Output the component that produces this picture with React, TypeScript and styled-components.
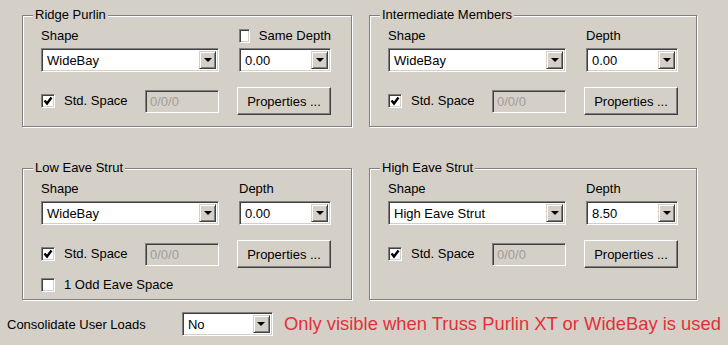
import styled, { createGlobalStyle } from 'styled-components';

const GlobalStyle = createGlobalStyle`
  html, body {
    margin: 0;
    padding: 0;
    background: #d4d0c8;
  }
  body {
    font-family: 'Liberation Sans', Arial, sans-serif;
    font-size: 13px;
    color: #000;
  }
`;

type GroupData = {
  title: string;
  shape: string;
  depth: string;
  sameDepth?: boolean;
  oddEave?: boolean;
};

const top: GroupData[] = [
  { title: 'Ridge Purlin', shape: 'WideBay', depth: '0.00', sameDepth: true },
  { title: 'Intermediate Members', shape: 'WideBay', depth: '0.00' },
];

const bottom: GroupData[] = [
  { title: 'Low Eave Strut', shape: 'WideBay', depth: '0.00', oddEave: true },
  { title: 'High Eave Strut', shape: 'High Eave Strut', depth: '8.50' },
];

const Arrow = () => (
  <svg width="8" height="4" viewBox="0 0 8 4">
    <polygon points="0,0 8,0 4,4" fill="#000" />
  </svg>
);

const Tick = () => (
  <svg width="10" height="10" viewBox="0 0 10 10">
    <polyline points="1.5,4.5 4,7.5 8.5,1.5" fill="none" stroke="#000" strokeWidth="2.4" />
  </svg>
);

const Dropdown = ({ value, width }: { value: string; width?: number }) => (
  <SelectBox $width={width}>
    <SelectText>{value}</SelectText>
    <ArrowBtn>
      <Arrow />
    </ArrowBtn>
  </SelectBox>
);

const Check = ({ label, checked }: { label: string; checked?: boolean }) => (
  <CheckLabel>
    <CheckBox>{checked && <Tick />}</CheckBox>
    <span>{label}</span>
  </CheckLabel>
);

const Group = ({ data, padBottom }: { data: GroupData; padBottom: number }) => (
  <Fieldset $pb={padBottom}>
    <Legend>{data.title}</Legend>
    <Row $top={0}>
      <Label>Shape</Label>
      {data.sameDepth ? <Check label="Same Depth" /> : <Label>Depth</Label>}
    </Row>
    <Row $top={4}>
      <Dropdown value={data.shape} />
      <Dropdown value={data.depth} />
    </Row>
    <Row $top={15}>
      <SpaceCell>
        <Check label="Std. Space" checked />
        <TextBox>0/0/0</TextBox>
      </SpaceCell>
      <Button>Properties ...</Button>
    </Row>
    {data.oddEave && (
      <Row $top={9}>
        <Check label="1 Odd Eave Space" />
      </Row>
    )}
  </Fieldset>
);

const App = () => {
  return (
    <Page>
      <GlobalStyle />
      <Groups>
        {top.map((g) => (
          <Group key={g.title} data={g} padBottom={11} />
        ))}
        {bottom.map((g) => (
          <Group key={g.title} data={g} padBottom={6} />
        ))}
      </Groups>
      <Footer>
        <FooterLabel>Consolidate User Loads</FooterLabel>
        <Dropdown value="No" width={91} />
        <Notice>Only visible when Truss Purlin XT or WideBay is used</Notice>
      </Footer>
    </Page>
  );
};

const Page = styled.div`
  padding: 7px 7px 0;
`;

const Groups = styled.div`
  display: grid;
  grid-template-columns: 330px 328px;
  column-gap: 17px;
  row-gap: 33px;
  padding: 0 15px;
`;

const Fieldset = styled.fieldset<{ $pb: number }>`
  margin: 0;
  min-width: 0;
  padding: 5px 10px ${(p) => p.$pb}px 18px;
  border: 1px solid #808080;
  box-shadow: inset 1px 1px 0 #fff, 1px 1px 0 #fff;
`;

const Legend = styled.legend`
  padding: 0 2px;
  margin-left: -8px;
  line-height: 16px;
  background: #d4d0c8;
`;

const Row = styled.div<{ $top: number }>`
  display: grid;
  grid-template-columns: 178px 92px;
  column-gap: 20px;
  align-items: center;
  margin-top: ${(p) => p.$top}px;
`;

const Label = styled.div`
  line-height: 16px;
`;

const SelectBox = styled.div<{ $width?: number }>`
  display: flex;
  align-items: center;
  box-sizing: border-box;
  width: ${(p) => (p.$width ? `${p.$width}px` : '100%')};
  height: 24px;
  background: #fff;
  border: 1px solid;
  border-color: #808080 #fff #fff #808080;
  box-shadow: inset 1px 1px 0 #404040, inset -1px -1px 0 #d4d0c8;
  padding: 2px;
`;

const SelectText = styled.span`
  flex: 1;
  padding-left: 3px;
  white-space: nowrap;
  overflow: hidden;
`;

const ArrowBtn = styled.span`
  display: flex;
  align-items: center;
  justify-content: center;
  box-sizing: border-box;
  width: 17px;
  height: 18px;
  background: #d4d0c8;
  border: 1px solid;
  border-color: #d4d0c8 #404040 #404040 #d4d0c8;
  box-shadow: inset 1px 1px 0 #fff, inset -1px -1px 0 #808080;
`;

const CheckLabel = styled.label`
  display: flex;
  align-items: center;
  gap: 9px;
  line-height: 16px;
  white-space: nowrap;
`;

const CheckBox = styled.span`
  display: flex;
  align-items: center;
  justify-content: center;
  box-sizing: border-box;
  width: 14px;
  height: 14px;
  background: #fff;
  border: 1px solid;
  border-color: #808080 #fff #fff #808080;
  box-shadow: inset 1px 1px 0 #404040, inset -1px -1px 0 #d4d0c8;
`;

const SpaceCell = styled.div`
  display: flex;
  align-items: center;
  justify-content: space-between;
`;

const TextBox = styled.div`
  box-sizing: border-box;
  width: 74px;
  height: 23px;
  padding: 3px 4px;
  line-height: 15px;
  color: #a09d98;
  border: 1px solid;
  border-color: #808080 #fff #fff #808080;
  box-shadow: inset 1px 1px 0 #404040, inset -1px -1px 0 #d4d0c8;
`;

const Button = styled.button`
  box-sizing: border-box;
  width: 94px;
  height: 28px;
  margin-left: -2px;
  padding: 0;
  font: inherit;
  color: #000;
  background: #d4d0c8;
  border: 1px solid;
  border-color: #fff #404040 #404040 #fff;
  box-shadow: inset -1px -1px 0 #808080;
`;

const Footer = styled.div`
  display: flex;
  align-items: center;
  margin-top: 12px;
`;

const FooterLabel = styled.div`
  width: 175px;
`;

const Notice = styled.div`
  margin-left: 11px;
  font-size: 18.4px;
  color: #e3303a;
  white-space: nowrap;
`;

export default App;
